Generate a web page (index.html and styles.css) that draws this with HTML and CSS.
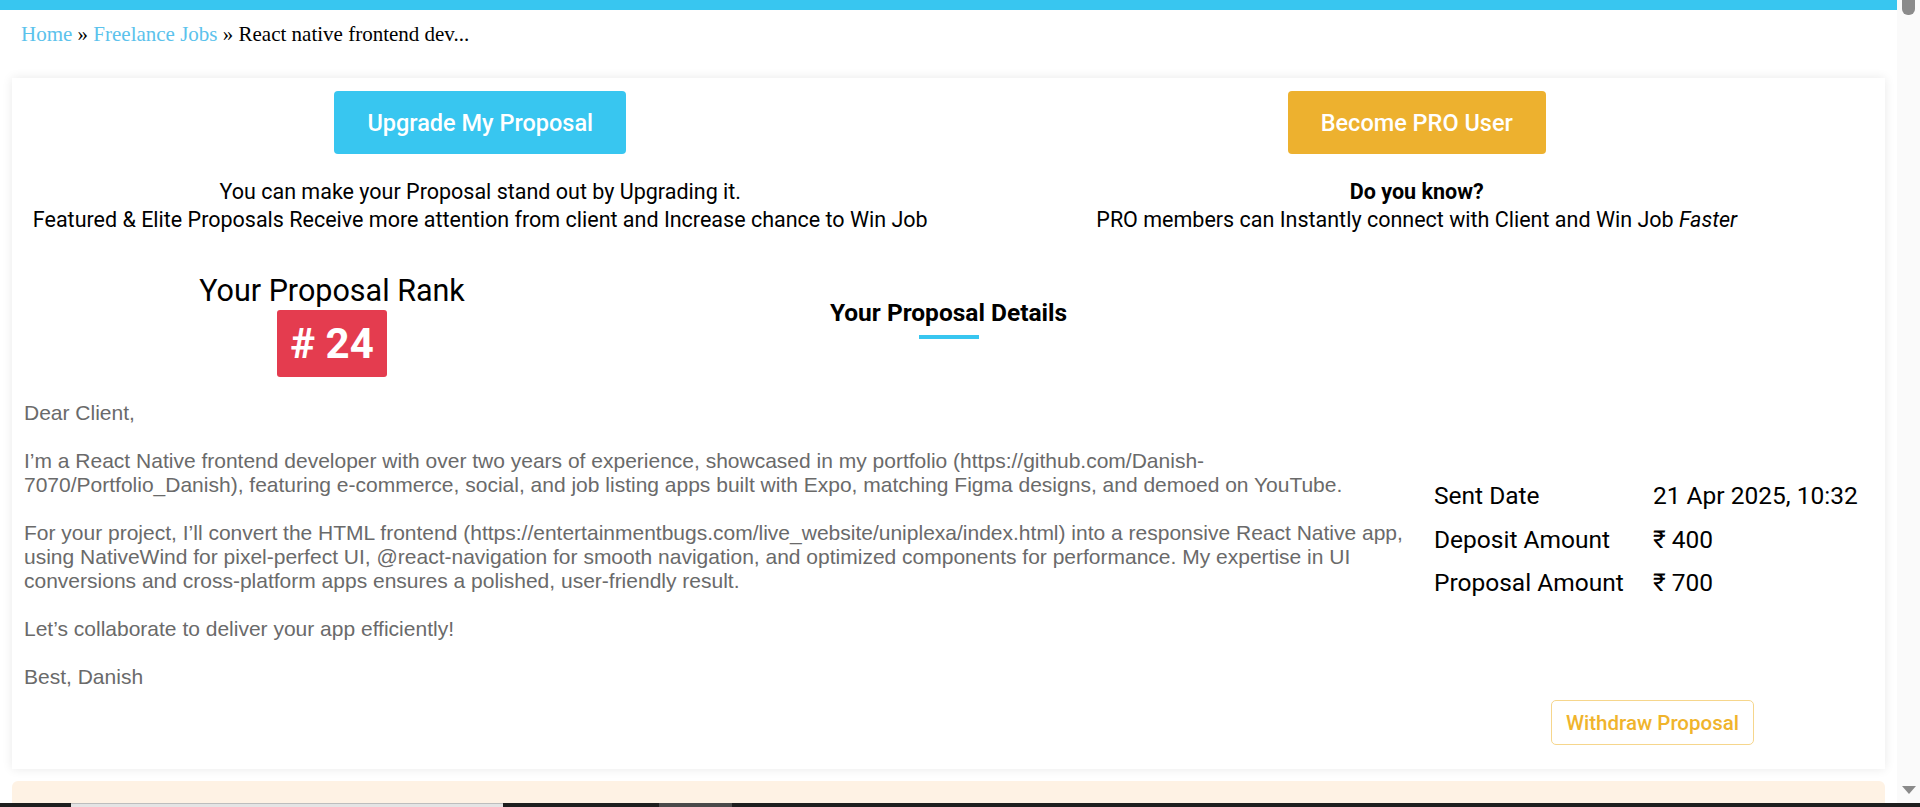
FILE: index.html
```html
<!DOCTYPE html>
<html lang="en">
<head>
<meta charset="utf-8">
<title>Proposal Details</title>
<link rel="stylesheet" href="styles.css">
</head>
<body>
<div class="screen">
  <div class="page">
    <div class="topbar"></div>
    <nav class="crumbs"><a class="crumb-link" href="#">Home</a> » <a class="crumb-link" href="#">Freelance Jobs</a> » React native frontend dev...</nav>
    <section class="card">
      <div class="cta-row">
        <div class="cta">
          <a class="btn btn-blue" href="#">Upgrade My Proposal</a>
          <p class="cta-text">You can make your Proposal stand out by Upgrading it.<br>Featured &amp; Elite Proposals Receive more attention from client and Increase chance to Win Job</p>
        </div>
        <div class="cta">
          <a class="btn btn-gold" href="#">Become PRO User</a>
          <p class="cta-text"><b>Do you know?</b><br>PRO members can Instantly connect with Client and Win Job <i>Faster</i></p>
        </div>
      </div>
      <div class="rank-row">
        <div class="rank">
          <div class="rank-title">Your Proposal Rank</div>
          <div class="rank-badge"># 24</div>
        </div>
        <div class="details-head">
          <h2 class="details-title">Your Proposal Details</h2>
          <div class="details-line"></div>
        </div>
        <div></div>
      </div>
      <div class="body-row">
        <div class="letter">Dear Client,<br><br>I’m a React Native frontend developer with over two years of experience, showcased in my portfolio (https://github.com/Danish-7070/Portfolio_Danish), featuring e-commerce, social, and job listing apps built with Expo, matching Figma designs, and demoed on YouTube.<br><br>For your project, I’ll convert the HTML frontend (https://entertainmentbugs.com/live_website/uniplexa/index.html) into a responsive React Native app, using NativeWind for pixel-perfect UI, @react-navigation for smooth navigation, and optimized components for performance. My expertise in UI conversions and cross-platform apps ensures a polished, user-friendly result.<br><br>Let’s collaborate to deliver your app efficiently!<br><br>Best, Danish</div>
        <div class="side">
          <table class="meta">
            <tr><td class="meta-label">Sent Date</td><td>21 Apr 2025, 10:32</td></tr>
            <tr><td class="meta-label">Deposit Amount</td><td>₹ 400</td></tr>
            <tr><td class="meta-label">Proposal Amount</td><td>₹ 700</td></tr>
          </table>
        </div>
      </div>
      <div class="action-row">
        <div></div>
        <div class="action-cell"><a class="btn-outline" href="#">Withdraw Proposal</a></div>
      </div>
    </section>
    <div class="notice"></div>
  </div>
  <div class="scrollbar">
    <div class="thumb"></div>
    <div class="track-fill"></div>
    <div class="arrow-down"></div>
  </div>
</div>
<div class="taskbar">
  <div class="task task-a"></div>
  <div class="task-gap"></div>
  <div class="task task-b"></div>
</div>
</body>
</html>
```

FILE: styles.css
```css
html, body {
  margin: 0;
  padding: 0;
  height: 100%;
  overflow: hidden;
  background: #fff;
}
body {
  display: flex;
  flex-direction: column;
  font-family: Roboto, "Liberation Sans", Arial, sans-serif;
  color: #000;
}
.screen {
  flex: 1;
  display: flex;
  min-height: 0;
}
.page {
  flex: 1;
  min-width: 0;
  overflow: hidden;
  display: flex;
  flex-direction: column;
}
.topbar {
  height: 10px;
  background: #38c6f0;
  flex: none;
}
.crumbs {
  font-family: "Liberation Serif", "Times New Roman", serif;
  font-size: 21px;
  line-height: 24px;
  padding: 12px 21px 0;
  color: #000;
}
.crumb-link {
  color: #5bc2ec;
  text-decoration: none;
}
.card {
  margin: 32px 12px 0;
  background: #fff;
  box-shadow: 0 0 10px rgba(0, 0, 0, 0.09);
  padding: 13px 0 24px;
  flex: none;
}
.cta-row {
  display: grid;
  grid-template-columns: 1fr 1fr;
}
.cta {
  display: flex;
  flex-direction: column;
  align-items: center;
}
.btn {
  display: flex;
  align-items: center;
  height: 63px;
  padding: 0 33px;
  border-radius: 4px;
  color: #fff;
  font-weight: 500;
  font-size: 23.5px;
  text-decoration: none;
}
.btn-blue { background: #38c6f0; }
.btn-gold { background: #edb12f; }
.cta-text {
  margin: 24px 0 0;
  font-size: 21.5px;
  line-height: 28px;
  text-align: center;
}
.cta-text b { font-weight: 700; }
.rank-row {
  display: grid;
  grid-template-columns: 640px 1fr 640px;
  margin-top: 40px;
}
.rank {
  display: flex;
  flex-direction: column;
  align-items: center;
}
.rank-title {
  font-size: 30.5px;
  line-height: 34px;
}
.rank-badge {
  margin-top: 2px;
  background: #e43c4f;
  color: #fff;
  font-weight: 700;
  font-size: 42px;
  height: 67px;
  line-height: 67px;
  padding: 0 13px;
  border-radius: 3px;
}
.details-head {
  display: flex;
  flex-direction: column;
  align-items: center;
  padding-top: 25px;
}
.details-title {
  margin: 0;
  font-size: 24.5px;
  line-height: 28px;
  font-weight: 700;
}
.details-line {
  width: 60px;
  height: 4px;
  margin-top: 8px;
  background: #38c6f0;
}
.body-row {
  display: grid;
  grid-template-columns: 1fr 465px;
  margin-top: 24px;
}
.letter {
  padding-left: 12px;
  font-family: "Liberation Sans", Arial, sans-serif;
  font-size: 21px;
  line-height: 24px;
  color: #6a6a6a;
}
.side {
  padding: 73px 0 0 14px;
}
.meta {
  border-collapse: collapse;
  font-size: 24.5px;
}
.meta td {
  padding: 0;
  height: 43.5px;
  vertical-align: middle;
  white-space: nowrap;
}
.meta-label {
  width: 219px;
}
.action-row {
  display: grid;
  grid-template-columns: 1fr 465px;
  margin-top: 11px;
}
.action-cell {
  display: flex;
  justify-content: center;
}
.btn-outline {
  display: flex;
  align-items: center;
  height: 43px;
  padding: 0 14px;
  border: 1px solid #f6d68c;
  border-radius: 5px;
  color: #f0b42c;
  font-size: 20.5px;
  font-weight: 500;
  text-decoration: none;
}
.notice {
  margin: 12px 12px 0;
  flex: 1;
  background: #fef2e4;
  border-radius: 6px 6px 0 0;
}
.scrollbar {
  width: 23px;
  flex: none;
  background: #fafafa;
  display: flex;
  flex-direction: column;
  align-items: center;
}
.thumb {
  width: 13px;
  height: 15px;
  background: #8b8b8b;
  border-radius: 0 0 6px 6px;
}
.track-fill { flex: 1; }
.arrow-down {
  width: 0;
  height: 0;
  border-left: 7.5px solid transparent;
  border-right: 7.5px solid transparent;
  border-top: 8px solid #8a8a8a;
  margin-bottom: 9px;
}
.taskbar {
  height: 4px;
  flex: none;
  background: #1e1e1e;
  display: flex;
}
.task { height: 4px; }
.task-a {
  margin-left: 71px;
  width: 432px;
  background: #e4e4e4;
  border-top: 1px solid #bdbdbd;
  height: 3px;
}
.task-gap { width: 156px; }
.task-b {
  width: 73px;
  background: #4a4a4a;
}
```
